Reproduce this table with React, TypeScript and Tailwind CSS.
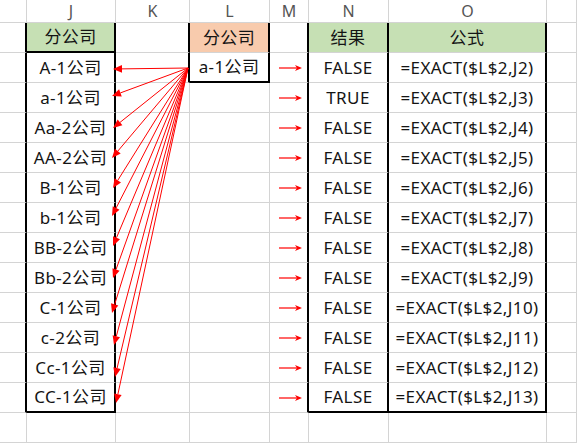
const cols = ["", "J", "K", "L", "M", "N", "O", ""];

const jItems = [
  "A-1公司", "a-1公司", "Aa-2公司", "AA-2公司", "B-1公司", "b-1公司",
  "BB-2公司", "Bb-2公司", "C-1公司", "c-2公司", "Cc-1公司", "CC-1公司",
];

const results = ["FALSE", "TRUE", "FALSE", "FALSE", "FALSE", "FALSE", "FALSE", "FALSE", "FALSE", "FALSE", "FALSE", "FALSE"];

// arrow tips at the right edge of column J
const tips: [number, number][] = [
  [113, 69], [112, 96], [113, 128], [112, 158], [113, 188], [112, 216],
  [113, 246], [113, 278], [112, 313], [114, 345], [115, 377], [116, 403],
];
const tail: [number, number] = [188, 68];

const gray = "border-[#d4d4d4]";

function Cell({ className = "", children }: { className?: string; children?: React.ReactNode }) {
  return (
    <div className={`box-border flex items-center justify-center border-r border-b ${gray} ${className}`}>
      {children}
    </div>
  );
}

function SmallArrow() {
  return (
    <svg width="24" height="8" viewBox="0 0 24 8" className="ml-[4px]">
      <line x1="0" y1="4" x2="20" y2="4" stroke="#ff0000" strokeWidth="1.2" />
      <polygon points="23,4 16,1 18,4 16,7" fill="#ff0000" />
    </svg>
  );
}

function Arrows() {
  return (
    <svg className="pointer-events-none absolute left-0 top-0" width="577" height="443">
      {tips.map(([hx, hy], i) => {
        const dx = hx - tail[0];
        const dy = hy - tail[1];
        const len = Math.hypot(dx, dy);
        const ux = dx / len;
        const uy = dy / len;
        const bx = hx - ux * 9;
        const by = hy - uy * 9;
        const nx = -uy * 3.8;
        const ny = ux * 3.8;
        return (
          <g key={i}>
            <line x1={tail[0]} y1={tail[1]} x2={bx} y2={by} stroke="#ff0000" strokeWidth="1" />
            <polygon points={`${hx},${hy} ${bx + nx},${by + ny} ${bx - nx},${by - ny}`} fill="#ff0000" />
          </g>
        );
      })}
    </svg>
  );
}

export default function App() {
  const rows = Array.from({ length: 14 }, (_, i) => i + 1);
  return (
    <div
      className="relative h-[443px] w-[577px] overflow-hidden bg-white text-[17px] tracking-[0.4px] text-[#141414]"
      style={{ fontFamily: '"Noto Sans", "Noto Sans CJK SC", sans-serif' }}
    >
      <div className="grid grid-cols-[27px_89px_74px_80px_39px_80px_158px_30px] grid-rows-[23px_repeat(14,30px)]">
        {cols.map((c, i) => (
          <Cell key={`h${i}`} className="text-[16px] leading-none tracking-normal text-[#555]">
            {c}
          </Cell>
        ))}
        {rows.map((r) => {
          const inBox = r <= 13;
          const bold = "border-r-2 border-r-black";
          const j = r === 1 ? "分公司" : r <= 13 ? jItems[r - 2] : "";
          return [
            <Cell key={`i${r}`} className={inBox ? bold : ""} />,
            <Cell
              key={`j${r}`}
              className={`${inBox ? bold : ""} ${r === 1 ? "bg-[#c6e0b4] border-b-2 border-b-black" : ""} ${r === 13 ? "border-b-2 border-b-black" : ""}`}
            >
              {j}
            </Cell>,
            <Cell key={`k${r}`} className={r <= 2 ? bold : ""} />,
            <Cell
              key={`l${r}`}
              className={`${r <= 2 ? bold : ""} ${r === 1 ? "bg-[#f8cbad]" : ""} ${r === 2 ? "border-b-2 border-b-black" : ""}`}
            >
              {r === 1 ? "分公司" : r === 2 ? "a-1公司" : ""}
            </Cell>,
            <Cell key={`m${r}`} className={inBox ? bold : ""}>
              {r >= 2 && r <= 13 ? <SmallArrow /> : null}
            </Cell>,
            <Cell
              key={`n${r}`}
              className={`${inBox ? bold : ""} ${r === 1 ? "bg-[#c6e0b4]" : ""} ${r === 13 ? "border-b-2 border-b-black" : ""}`}
            >
              {r === 1 ? "结果" : r <= 13 ? results[r - 2] : ""}
            </Cell>,
            <Cell
              key={`o${r}`}
              className={`${inBox ? bold : ""} ${r === 1 ? "bg-[#c6e0b4]" : ""} ${r === 13 ? "border-b-2 border-b-black" : ""}`}
            >
              {r === 1 ? "公式" : r <= 13 ? `=EXACT($L$2,J${r})` : ""}
            </Cell>,
            <Cell key={`p${r}`} />,
          ];
        })}
      </div>
      <Arrows />
    </div>
  );
}
